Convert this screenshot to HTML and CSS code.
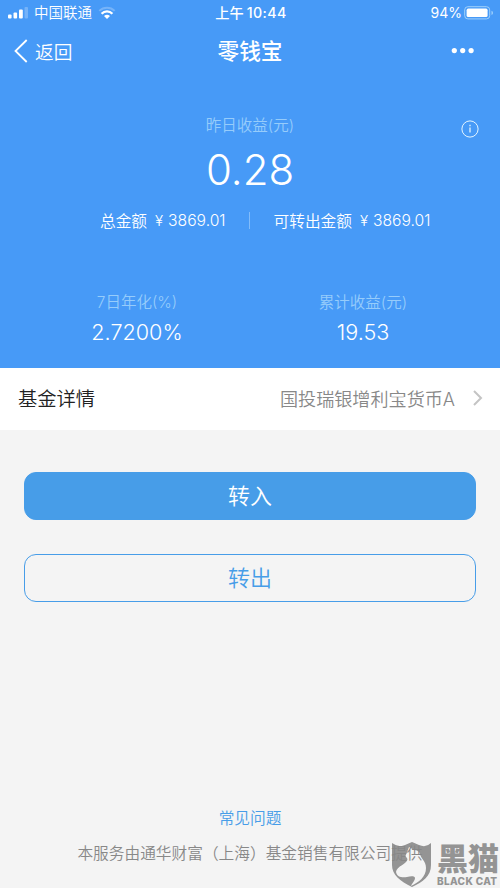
FILE: index.html
```
<!DOCTYPE html>
<html lang="zh-CN">
<head>
<meta charset="utf-8">
<meta name="viewport" content="width=device-width">
<title>零钱宝</title>
<link rel="stylesheet" href="styles.css">
</head>
<body>
<header class="hero">
  <div class="status">
    <div class="status-left">
      <svg width="20" height="12" viewBox="0 0 20 12" fill="#fff"><rect y="7.5" width="3.6" height="4" rx="1"/><rect x="5.5" y="5.5" width="3.6" height="6" rx="1"/><rect x="11" y="2.5" width="3.8" height="9" rx="1"/><rect x="16.5" y="0" width="3.5" height="11.5" rx="1" opacity=".25"/></svg>
      <span class="carrier">中国联通</span>
      <svg width="18" height="14" viewBox="0 0 18 14" fill="none" stroke="#fff"><path d="M1.3 4.9a11 11 0 0 1 15.4 0" stroke-width="2" opacity=".25"/><path d="M3.6 7.7a7.4 7.4 0 0 1 10.8 0" stroke-width="2.3"/><path d="M6 10.1a4.3 4.3 0 0 1 6 0L9 13z" fill="#fff" stroke="none"/></svg>
    </div>
    <span class="clock">上午<span class="time">10:44</span></span>
    <div class="status-right">
      <span>94%</span>
      <svg width="30" height="14" viewBox="0 0 30 14"><rect x=".7" y=".7" width="25" height="12.2" rx="3.2" fill="none" stroke="#9fd0fb" stroke-width="1"/><rect x="2.6" y="2.6" width="21" height="8.4" rx="1.6" fill="#fff"/><path d="M27.5 4.8q1.5.6 1.5 2.1t-1.5 2.1z" fill="#9fd0fb"/></svg>
    </div>
  </div>
  <nav class="nav">
    <a class="back"><svg width="14" height="24" viewBox="0 0 14 24" fill="none" stroke="#fff" stroke-width="1.8"><path d="M12.7 1 1.5 12l11.2 11"/></svg><span>返回</span></a>
    <h1>零钱宝</h1>
    <svg class="more" width="24" height="6" viewBox="0 0 24 6" fill="#fff"><circle cx="3.3" cy="2.6" r="2.6"/><circle cx="11.7" cy="2.6" r="2.6"/><circle cx="20.1" cy="2.6" r="2.6"/></svg>
  </nav>
  <section class="yesterday">
    <p class="label">昨日收益(元)</p>
    <svg class="info" width="18" height="18" viewBox="0 0 18 18" fill="none" stroke="#e4f5ff"><circle cx="9" cy="9" r="8.1" stroke-width="1"/><path d="M9 7.4v5.2M9 4.8v1.4" stroke-width="1.3"/></svg>
    <p class="amount">0.28</p>
  </section>
  <div class="totals">
    <div class="total">总金额<span class="yen">¥</span><span class="sum">3869.01</span></div>
    <i class="divider"></i>
    <div class="total">可转出金额<span class="yen">¥</span><span class="sum">3869.01</span></div>
  </div>
  <div class="stats">
    <div class="stat"><p class="label">7日年化(%)</p><p class="figure">2.7200%</p></div>
    <div class="stat"><p class="label">累计收益(元)</p><p class="figure">19.53</p></div>
  </div>
</header>
<main>
  <a class="fund">
    <span class="fund-title">基金详情</span>
    <span class="fund-name">国投瑞银增利宝货币A</span>
    <svg width="10" height="16" viewBox="0 0 10 16" fill="none" stroke="#c4c4c4" stroke-width="2"><path d="m1 1 7 7-7 7"/></svg>
  </a>
  <div class="actions">
    <button class="btn primary">转入</button>
    <button class="btn outline">转出</button>
  </div>
</main>
<footer>
  <a class="faq">常见问题</a>
  <p class="provider">本服务由通华财富（上海）基金销售有限公司提供</p>
</footer>
<div class="mark">
  <svg width="40" height="46" viewBox="0 0 40 46"><path fill-rule="evenodd" d="M0 1q7 5 13 2l7-3 7 3q7 3 12-2v22c0 11-8 17-19 22C8 39 0 33 0 23zM17 5l-1.500 4-2 5 2 3c0 5-11 7-11.500 13 1 5 6 6 11 5 4-1 8-1 8 1 0 3-3 5-4 8 8-4 15-9 15-18 0-7-5-9-6-14-1-3-3-4-6-4z" fill="#878787"/></svg>
  <div class="mark-text"><span class="mark-cn">黑猫</span><span class="mark-en">BLACK CAT</span></div>
</div>
</body>
</html>
```
FILE: styles.css
```
* { box-sizing: border-box; }
body {
  margin: 0;
  width: 500px;
  height: 888px;
  overflow: hidden;
  position: relative;
  display: flex;
  flex-direction: column;
  background: #f4f4f4;
  font-family: Inter, "Noto Sans CJK SC", sans-serif;
  font-weight: 350;
  white-space: nowrap;
}
p, h1 { margin: 0; }
svg { display: block; flex: none; }
.hero { height: 368px; background: #479af7; color: #fff; }
.status {
  height: 26px;
  padding: 0 6px 0 8px;
  display: grid;
  grid-template-columns: 1fr auto 1fr;
  align-items: center;
  font-size: 14.5px;
  line-height: 26px;
}
.status-left { display: flex; align-items: center; gap: 7px; }
.status-left svg:last-child { margin-left: -1px; }
.carrier { margin-left: -1px; }
.clock { font-weight: 500; font-size: 14.2px; }
.time { margin-left: 3px; letter-spacing: 0.4px; }
.status-right { display: flex; justify-content: flex-end; align-items: center; gap: 2px; font-weight: 400; font-size: 14px; }
.nav {
  height: 50px;
  padding: 0 25px 0 14px;
  display: grid;
  grid-template-columns: 1fr auto 1fr;
  align-items: center;
}
.back { display: flex; align-items: center; gap: 8px; font-size: 18.7px; }
.back span { padding-bottom: 2px; margin-left: -1px; }
h1 { font-size: 21.7px; font-weight: 500; line-height: 50px; margin-left: 11px; }
.more { justify-self: end; }
.yesterday { position: relative; height: 124px; padding-top: 37px; text-align: center; }
.label { font-size: 15.5px; line-height: 26px; color: #96ccfb; }
.info { position: absolute; left: 461px; top: 44px; }
.amount { font-size: 42px; line-height: 62px; font-weight: 300; }
.totals { height: 40px; padding-left: 100px; display: flex; align-items: center; font-size: 15.7px; }
.total { display: flex; align-items: center; }
.yen { margin-left: 8px; width: 13px; font-size: 15px; }
.divider { width: 1px; height: 17px; margin: 0 24px 0 23px; background: #82bcfa; }
.stats { margin: 50px 24px 0; display: grid; grid-template-columns: 1fr 1fr; text-align: center; }
.figure { font-size: 21.6px; line-height: 32px; }
.fund { height: 62px; padding: 0 17px 2px 18px; display: flex; align-items: center; background: #fff; }
.fund-title { font-size: 19.3px; color: #222; }
.fund-name { margin-left: auto; margin-right: 18px; font-size: 18.1px; color: #888; }
.actions { padding: 42px 24px 0; display: grid; gap: 34px; }
.btn {
  height: 48px;
  border: 1.5px solid #479de8;
  border-radius: 12px;
  padding: 0 0 4px;
  font: inherit;
  font-size: 22px;
}
.primary { background: #479de8; color: #fff; }
.outline { background: transparent; color: #479de8; }
footer { margin-top: auto; height: 86px; text-align: center; font-size: 15.7px; }
.faq { display: block; line-height: 34px; color: #479de8; }
.provider { line-height: 35px; color: #888; }
.mark { position: absolute; left: 392px; top: 842px; display: flex; gap: 5px; color: #878787; opacity: 0.88; }
.mark-text { display: flex; flex-direction: column; }
.mark-cn { height: 32px; font-size: 31px; line-height: 34px; font-weight: 900; }
.mark-en { font-size: 10px; line-height: 14px; font-weight: 800; letter-spacing: 0.35px; }
```
